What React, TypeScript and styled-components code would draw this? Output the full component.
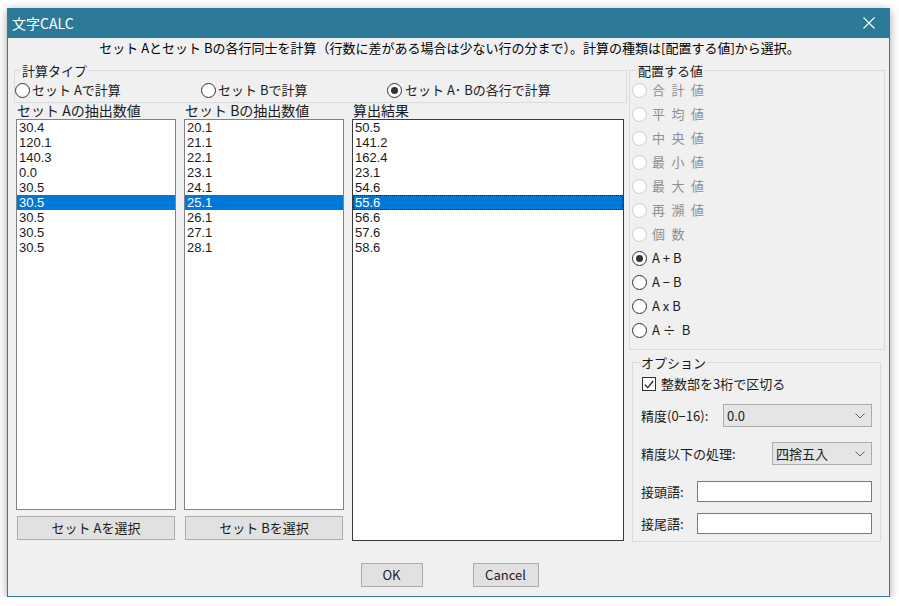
import React from 'react';
import styled, { createGlobalStyle } from 'styled-components';

// ─────────────────────────────────────────────────────────────────
// Data
// ─────────────────────────────────────────────────────────────────

const setAValues = ['30.4', '120.1', '140.3', '0.0', '30.5', '30.5', '30.5', '30.5', '30.5'];
const setBValues = ['20.1', '21.1', '22.1', '23.1', '24.1', '25.1', '26.1', '27.1', '28.1'];
const resultValues = ['50.5', '141.2', '162.4', '23.1', '54.6', '55.6', '56.6', '57.6', '58.6'];
const SELECTED_ROW = 5;

const placeOptions = [
  { label: '合\u2002計\u2002値', disabled: true },
  { label: '平\u2002均\u2002値', disabled: true },
  { label: '中\u2002央\u2002値', disabled: true },
  { label: '最\u2002小\u2002値', disabled: true },
  { label: '最\u2002大\u2002値', disabled: true },
  { label: '再\u2002瀕\u2002値', disabled: true },
  { label: '個\u2002数', disabled: true },
  { label: 'A + B', checked: true },
  { label: 'A − B' },
  { label: 'A x B' },
  { label: 'A ÷  B' },
];

// ─────────────────────────────────────────────────────────────────
// Styled Components
// ─────────────────────────────────────────────────────────────────

const GlobalStyle = createGlobalStyle`
  html, body {
    margin: 0;
    padding: 0;
    background: #ffffff;
  }
  body {
    font-family: "Noto Sans CJK JP", "Noto Sans", sans-serif;
    color: #000000;
  }
  * {
    box-sizing: border-box;
  }
`;

const Window = styled.div`
  width: 883px;
  height: 589px;
  margin: 8px 0 0 7px;
  display: flex;
  flex-direction: column;
  background: #f0f0f0;
  border: 1px solid #2f7a98;
  border-top: none;
  box-shadow: 0 2px 9px rgba(0, 0, 0, 0.35);
`;

const TitleBar = styled.div`
  height: 30px;
  flex: none;
  display: flex;
  align-items: center;
  justify-content: space-between;
  padding: 0 14px 0 4px;
  background: #2d7a98;
  color: #ffffff;
  font-size: 14px;
  line-height: 16px;
`;

const Body = styled.div`
  flex: 1;
  display: flex;
  flex-direction: column;
  padding: 2px 4px 9px 6px;
`;

const Description = styled.div`
  height: 16px;
  font-size: 13px;
  line-height: 16px;
  text-align: center;
  white-space: nowrap;
`;

const Main = styled.div`
  display: grid;
  grid-template-columns: 613px 256px;
  column-gap: 2px;
  height: 480px;
  margin-top: 7px;
`;

const Pane = styled.div`
  display: flex;
  flex-direction: column;
  min-width: 0;
`;

const Group = styled.fieldset<{ $pad: string; $margin?: string }>`
  margin: ${(p) => p.$margin || '0'};
  padding: ${(p) => p.$pad};
  border: 1px solid #dcdcdc;
  min-width: 0;
`;

const GroupLegend = styled.legend<{ $offset: number }>`
  margin-left: ${(p) => p.$offset}px;
  padding: 0 1px;
  font-size: 13px;
  line-height: 15px;
  color: #1a1a1a;
`;

const RadioRow = styled.div`
  display: grid;
  grid-template-columns: 186px 186px 1fr;
  align-items: center;
  height: 16px;
`;

const RadioLabel = styled.label<{ $gap: number; $height: number; $disabled?: boolean }>`
  display: flex;
  align-items: center;
  gap: ${(p) => p.$gap}px;
  height: ${(p) => p.$height}px;
  font-size: 13px;
  line-height: 16px;
  white-space: pre;
  color: ${(p) => (p.$disabled ? '#8f8f8f' : '#1a1a1a')};
`;

const RadioCircle = styled.span<{ $checked?: boolean; $disabled?: boolean }>`
  position: relative;
  flex: none;
  width: 15px;
  height: 15px;
  border-radius: 50%;
  background: #ffffff;
  border: 1px solid ${(p) => (p.$disabled ? '#cccccc' : '#333333')};

  &::after {
    content: '';
    display: ${(p) => (p.$checked ? 'block' : 'none')};
    position: absolute;
    inset: 3px;
    border-radius: 50%;
    background: #333333;
  }
`;

const Columns = styled.div`
  display: grid;
  grid-template-columns: 160px 160px 272px;
  column-gap: 8px;
  height: 437px;
  margin: 1px 0 0 2px;
`;

const Column = styled.div`
  display: flex;
  flex-direction: column;
  min-width: 0;
`;

const ColumnHeader = styled.div`
  height: 15px;
  font-size: 14px;
  line-height: 12px;
  padding-left: 1px;
  white-space: nowrap;
  color: #1a1a1a;
`;

const ListBox = styled.div<{ $height: number; $focused?: boolean }>`
  height: ${(p) => p.$height}px;
  background: #ffffff;
  border: 1px solid ${(p) => (p.$focused ? '#3a3a3a' : '#828282')};
  overflow: hidden;
`;

const ListRow = styled.div<{ $selected?: boolean; $focused?: boolean }>`
  height: 15px;
  padding-left: 2px;
  font-family: "Liberation Sans", Arial, sans-serif;
  font-size: 13px;
  line-height: 15px;
  background: ${(p) => (p.$selected ? '#0078d7' : 'transparent')};
  color: ${(p) => (p.$selected ? '#ffffff' : '#1a1a1a')};
  outline: ${(p) => (p.$selected && p.$focused ? '1px dotted #222222' : 'none')};
  outline-offset: -1px;
`;

const PushButton = styled.button<{ $width?: number }>`
  width: ${(p) => (p.$width ? `${p.$width}px` : 'auto')};
  height: 24px;
  padding: 0;
  background: #e1e1e1;
  border: 1px solid #adadad;
  font-family: inherit;
  font-size: 13px;
  line-height: 16px;
  color: #1a1a1a;
`;

const SelectButton = styled(PushButton)`
  margin: 6px 1px 0 1px;
`;

const OptionRow = styled.div<{ $mt: number; $height: number; $start?: boolean }>`
  display: flex;
  align-items: center;
  justify-content: ${(p) => (p.$start ? 'flex-start' : 'space-between')};
  gap: 5px;
  height: ${(p) => p.$height}px;
  margin-top: ${(p) => p.$mt}px;
  font-size: 13px;
  line-height: 16px;
  white-space: nowrap;
  color: #1a1a1a;
`;

const CheckBox = styled.span`
  display: flex;
  align-items: center;
  justify-content: center;
  width: 14px;
  height: 14px;
  margin-left: 1px;
  background: #ffffff;
  border: 1px solid #333333;
`;

const Select = styled.div<{ $width: number }>`
  width: ${(p) => p.$width}px;
  height: 23px;
  display: flex;
  align-items: center;
  justify-content: space-between;
  padding: 0 6px 0 3px;
  background: #e5e5e5;
  border: 1px solid #acacac;
  font-size: 13px;
`;

const TextInput = styled.input`
  width: 175px;
  height: 21px;
  background: #ffffff;
  border: 1px solid #7a7a7a;
  padding: 0 3px;
  font-family: inherit;
  font-size: 13px;
`;

const Footer = styled.div`
  display: flex;
  justify-content: center;
  gap: 50px;
  margin-top: 20px;
`;

// ─────────────────────────────────────────────────────────────────
// Small parts
// ─────────────────────────────────────────────────────────────────

const Chevron: React.FC = () => (
  <svg width="10" height="6" viewBox="0 0 10 6">
    <path d="M0.5 0.5 L5 5 L9.5 0.5" fill="none" stroke="#606060" strokeWidth="1" />
  </svg>
);

const CloseIcon: React.FC = () => (
  <svg width="12" height="12" viewBox="0 0 12 12">
    <path d="M0.5 0.5 L11.5 11.5 M11.5 0.5 L0.5 11.5" stroke="#ffffff" strokeWidth="1.1" />
  </svg>
);

const CheckMark: React.FC = () => (
  <svg width="10" height="9" viewBox="0 0 10 9">
    <path d="M0.8 4.6 L3.8 7.6 L9.2 1" fill="none" stroke="#222222" strokeWidth="1.3" />
  </svg>
);

interface ValueListProps {
  values: string[];
  height: number;
  focused?: boolean;
}

const ValueList: React.FC<ValueListProps> = ({ values, height, focused }) => (
  <ListBox $height={height} $focused={focused}>
    {values.map((v, i) => (
      <ListRow key={i} $selected={i === SELECTED_ROW} $focused={focused}>
        {v}
      </ListRow>
    ))}
  </ListBox>
);

// ─────────────────────────────────────────────────────────────────
// Component
// ─────────────────────────────────────────────────────────────────

const App: React.FC = () => {
  return (
    <>
      <GlobalStyle />
      <Window>
        <TitleBar>
          <span>文字CALC</span>
          <CloseIcon />
        </TitleBar>

        <Body>
          <Description>
            セット Aとセット Bの各行同士を計算（行数に差がある場合は少ない行の分まで）。計算の種類は[配置する値]から選択。
          </Description>

          <Main>
            {/* Left: calc type + lists */}
            <Pane>
              <Group $pad="4px 0 4px 0">
                <GroupLegend $offset={6}>計算タイプ</GroupLegend>
                <RadioRow>
                  <RadioLabel $gap={2} $height={16}>
                    <RadioCircle />
                    セット Aで計算
                  </RadioLabel>
                  <RadioLabel $gap={2} $height={16}>
                    <RadioCircle />
                    セット Bで計算
                  </RadioLabel>
                  <RadioLabel $gap={3} $height={16}>
                    <RadioCircle $checked />
                    セット A･ Bの各行で計算
                  </RadioLabel>
                </RadioRow>
              </Group>

              <Columns>
                <Column>
                  <ColumnHeader>セット Aの抽出数値</ColumnHeader>
                  <ValueList values={setAValues} height={391} />
                  <SelectButton>セット Aを選択</SelectButton>
                </Column>
                <Column>
                  <ColumnHeader>セット Bの抽出数値</ColumnHeader>
                  <ValueList values={setBValues} height={391} />
                  <SelectButton>セット Bを選択</SelectButton>
                </Column>
                <Column>
                  <ColumnHeader>算出結果</ColumnHeader>
                  <ValueList values={resultValues} height={422} focused />
                </Column>
              </Columns>
            </Pane>

            {/* Right: placement + options */}
            <Pane>
              <Group $pad="0 0 7px 2px">
                <GroupLegend $offset={5}>配置する値</GroupLegend>
                {placeOptions.map((o) => (
                  <RadioLabel key={o.label} $gap={5} $height={24} $disabled={o.disabled}>
                    <RadioCircle $checked={o.checked} $disabled={o.disabled} />
                    {o.label}
                  </RadioLabel>
                ))}
              </Group>

              <Group $pad="0 8px 7px 8px" $margin="5px 4px 0 3px">
                <GroupLegend $offset={-1}>オプション</GroupLegend>
                <OptionRow $mt={6} $height={16} $start>
                  <CheckBox>
                    <CheckMark />
                  </CheckBox>
                  整数部を3桁で区切る
                </OptionRow>
                <OptionRow $mt={12} $height={23}>
                  <span>精度(0−16):</span>
                  <Select $width={149}>
                    <span>0.0</span>
                    <Chevron />
                  </Select>
                </OptionRow>
                <OptionRow $mt={15} $height={23}>
                  <span>精度以下の処理:</span>
                  <Select $width={100}>
                    <span>四捨五入</span>
                    <Chevron />
                  </Select>
                </OptionRow>
                <OptionRow $mt={16} $height={21}>
                  <span>接頭語:</span>
                  <TextInput />
                </OptionRow>
                <OptionRow $mt={11} $height={21}>
                  <span>接尾語:</span>
                  <TextInput />
                </OptionRow>
              </Group>
            </Pane>
          </Main>

          <Footer>
            <PushButton $width={62}>OK</PushButton>
            <PushButton $width={66}>Cancel</PushButton>
          </Footer>
        </Body>
      </Window>
    </>
  );
};

export default App;
